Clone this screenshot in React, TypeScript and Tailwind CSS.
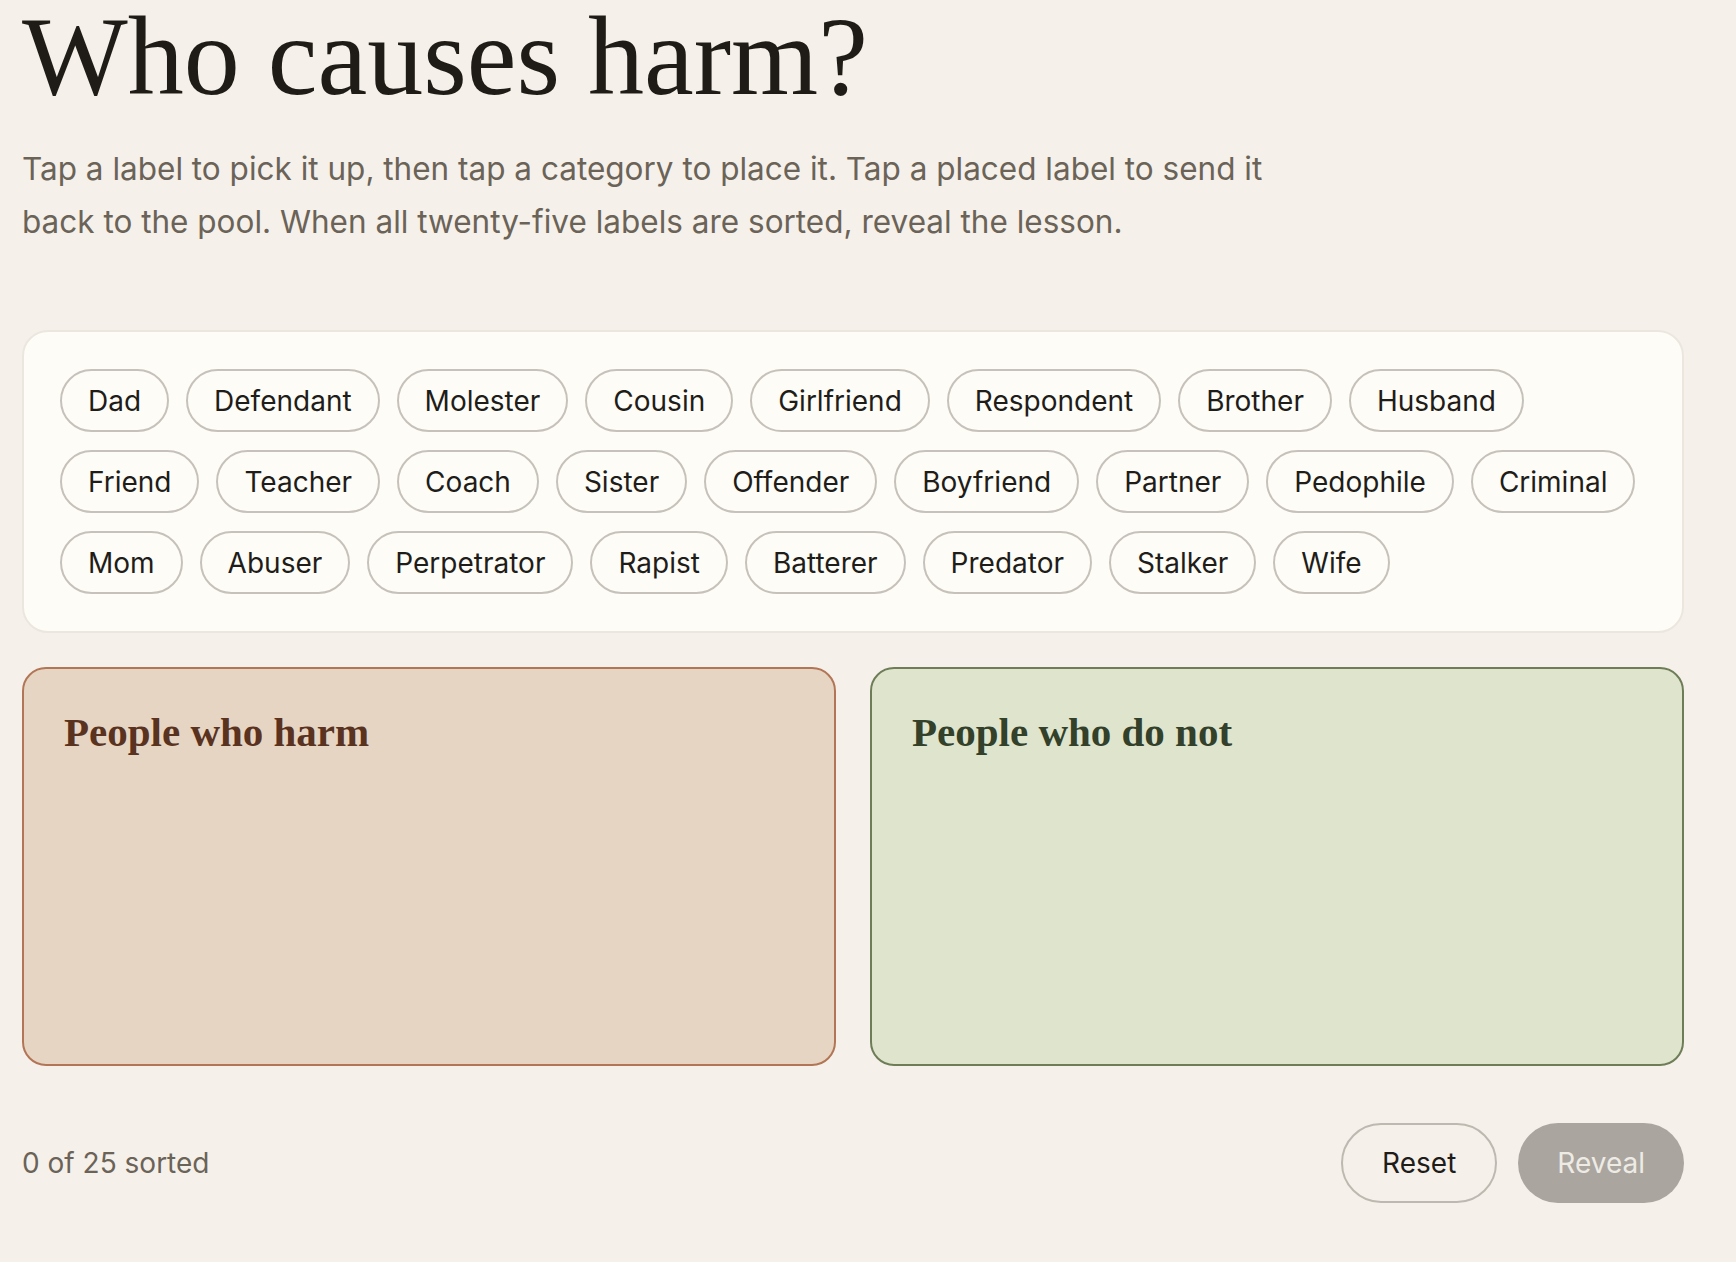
import { useState } from 'react';

const LABELS = [
  'Dad', 'Defendant', 'Molester', 'Cousin', 'Girlfriend', 'Respondent', 'Brother', 'Husband',
  'Friend', 'Teacher', 'Coach', 'Sister', 'Offender', 'Boyfriend', 'Partner', 'Pedophile', 'Criminal',
  'Mom', 'Abuser', 'Perpetrator', 'Rapist', 'Batterer', 'Predator', 'Stalker', 'Wife',
];

const serif = { fontFamily: '"Liberation Serif", "DejaVu Serif", serif' };

export default function App() {
  const [picked, setPicked] = useState<string | null>(null);
  const [harm, setHarm] = useState<string[]>([]);
  const [notHarm, setNotHarm] = useState<string[]>([]);

  const pool = LABELS.filter((l) => !harm.includes(l) && !notHarm.includes(l));
  const sorted = harm.length + notHarm.length;

  const place = (target: 'harm' | 'not') => {
    if (!picked) return;
    if (target === 'harm') setHarm((v) => [...v, picked]);
    else setNotHarm((v) => [...v, picked]);
    setPicked(null);
  };

  const unplace = (label: string) => {
    setHarm((v) => v.filter((l) => l !== label));
    setNotHarm((v) => v.filter((l) => l !== label));
  };

  const chip = (label: string, onClick: () => void, active = false) => (
    <button
      key={label}
      type="button"
      onClick={onClick}
      className={`h-[63px] rounded-full border-2 px-[26px] text-[28px] text-[#1f1d1a] ${
        active ? 'border-[#1f1d1a] bg-[#efe9dc]' : 'border-[#c6c2bb] bg-[#fefcf6]'
      }`}
    >
      {label}
    </button>
  );

  return (
    <div
      className="min-h-screen bg-[#f5f1ea] pl-[22px] pr-[52px] pb-12 text-[#1f1d1a]"
      style={{ fontFamily: 'Inter, "DejaVu Sans", sans-serif' }}
    >
      <h1 className="text-[112px] leading-[112px] text-[#1f1c17]" style={serif}>
        Who causes harm?
      </h1>
      <p className="mt-[30px] max-w-[1275px] text-[31.5px] leading-[53px] text-[#6b6358]">
        Tap a label to pick it up, then tap a category to place it. Tap a placed label to send it back to the pool.
        When all twenty-five labels are sorted, reveal the lesson.
      </p>

      <div className="mt-[82px] flex flex-wrap gap-x-[17px] gap-y-[18px] rounded-[26px] border-2 border-[#ebe7df] bg-[#fefcf6] pl-[36px] pr-[28px] py-[37px]">
        {pool.map((l) => chip(l, () => setPicked(picked === l ? null : l), picked === l))}
      </div>

      <div className="mt-[34px] grid grid-cols-2 gap-[34px]">
        <div
          onClick={() => place('harm')}
          className="flex h-[399px] flex-col gap-4 rounded-[24px] border-2 border-[#b27656] bg-[#e6d5c3] px-[40px] pt-[38px] pb-[36px]"
        >
          <h2 className="text-[41px] font-bold leading-tight text-[#5a3220]" style={serif}>
            People who harm
          </h2>
          <div className="flex flex-wrap gap-3">{harm.map((l) => chip(l, () => unplace(l)))}</div>
        </div>
        <div
          onClick={() => place('not')}
          className="flex h-[399px] flex-col gap-4 rounded-[24px] border-2 border-[#6e7d58] bg-[#dfe4cd] px-[40px] pt-[38px] pb-[36px]"
        >
          <h2 className="text-[41px] font-bold leading-tight text-[#33402a]" style={serif}>
            People who do not
          </h2>
          <div className="flex flex-wrap gap-3">{notHarm.map((l) => chip(l, () => unplace(l)))}</div>
        </div>
      </div>

      <div className="mt-[57px] flex items-center justify-between">
        <span className="text-[28px] text-[#6b6358]">
          {sorted} of {LABELS.length} sorted
        </span>
        <div className="flex gap-[21px]">
          <button
            type="button"
            onClick={() => {
              setHarm([]);
              setNotHarm([]);
              setPicked(null);
            }}
            className="h-[80px] rounded-full border-2 border-[#bdb8b0] px-[39px] text-[28px] text-[#1f1d1a]"
          >
            Reset
          </button>
          <button
            type="button"
            disabled={sorted < LABELS.length}
            className="h-[80px] rounded-full bg-[#aaa59f] px-[39px] text-[28px] text-[#eeebe5]"
          >
            Reveal
          </button>
        </div>
      </div>
    </div>
  );
}
